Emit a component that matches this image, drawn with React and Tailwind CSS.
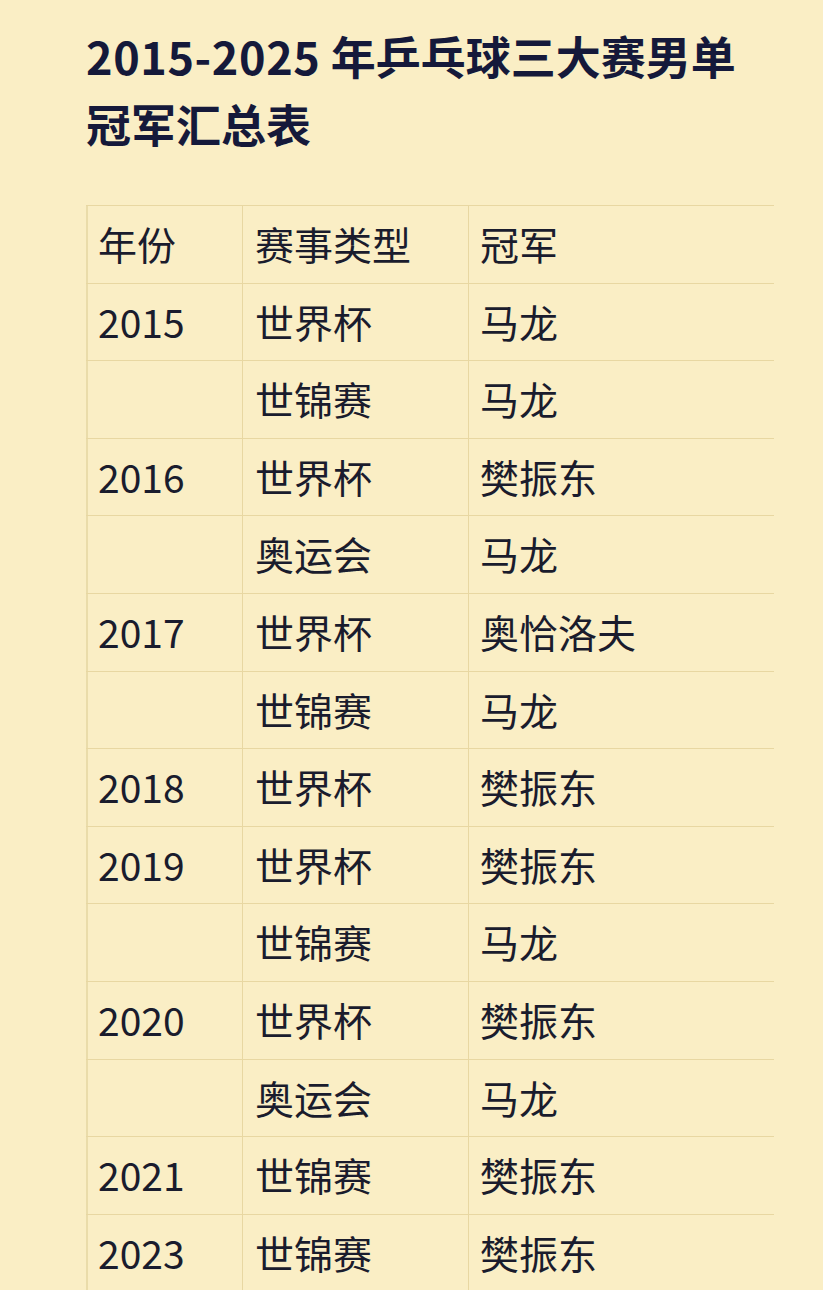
const rows = [
  ["2015", "世界杯", "马龙"],
  ["", "世锦赛", "马龙"],
  ["2016", "世界杯", "樊振东"],
  ["", "奥运会", "马龙"],
  ["2017", "世界杯", "奥恰洛夫"],
  ["", "世锦赛", "马龙"],
  ["2018", "世界杯", "樊振东"],
  ["2019", "世界杯", "樊振东"],
  ["", "世锦赛", "马龙"],
  ["2020", "世界杯", "樊振东"],
  ["", "奥运会", "马龙"],
  ["2021", "世锦赛", "樊振东"],
  ["2023", "世锦赛", "樊振东"],
];

function Row({ cells }) {
  return (
    <div className="flex h-[77.6px] border-t-[1.5px] border-[#e8d7a2]">
      <div className="w-[156px] shrink-0 flex items-center pl-[10px] pb-[2px] border-l-2 border-[#eadcaa]">
        {cells[0]}
      </div>
      <div className="w-[226px] shrink-0 flex items-center pl-[12px] pb-[2px] border-l-[1.5px] border-[#e8d7a2]">
        {cells[1]}
      </div>
      <div className="flex-1 flex items-center pl-[11px] pb-[2px] border-l-[1.5px] border-[#e8d7a2]">
        {cells[2]}
      </div>
    </div>
  );
}

export default function App() {
  return (
    <div
      className="h-[1290px] w-full overflow-hidden bg-[#faeec5] text-[#1a1c2d]"
      style={{ fontFamily: '"Noto Sans CJK SC", "Noto Sans", sans-serif' }}
    >
      {/* TITLE */}
      <div className="pl-[86px] pt-[22px] pr-4">
        <h1 className="text-[45px] leading-[68px] font-bold text-[#15193a]">
          <span className="tracking-[0.6px]">2015-2025</span> 年乒乓球三大赛男单
          <br />
          冠军汇总表
        </h1>
      </div>

      {/* TABLE */}
      <div className="ml-[86px] mt-[47px] w-[688px] text-[39px] font-normal">
        <Row cells={["年份", "赛事类型", "冠军"]} />
        {rows.map((r, i) => (
          <Row key={i} cells={r} />
        ))}
      </div>
    </div>
  );
}
